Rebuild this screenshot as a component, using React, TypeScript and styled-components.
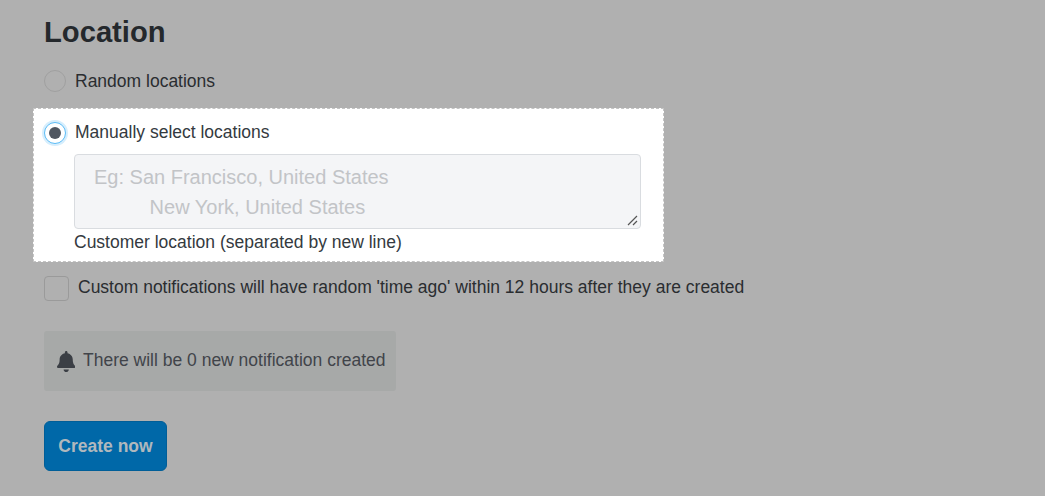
import React from "react";
import styled, { createGlobalStyle } from "styled-components";
import { FaBell } from "react-icons/fa";

const Global = createGlobalStyle`
  html, body { margin: 0; padding: 0; background: #b0b0b0; }
  body { font-family: "Liberation Sans", Arial, sans-serif; font-size: 17.5px; color: #24282c; }
  #root { height: 496px; overflow: hidden; }
`;

const Page = styled.main`
  box-sizing: border-box;
  height: 496px;
  padding: 15px 0 0 44px;
  display: flex;
  flex-direction: column;
  align-items: flex-start;
`;

const Heading = styled.h2`
  margin: 0;
  font-size: 29.2px;
  line-height: 35px;
  font-weight: 700;
  color: #24282c;
`;

const RadioRow = styled.label`
  display: flex;
  align-items: center;
  gap: 9px;
  height: 22px;
  line-height: 22px;
`;

const RandomRow = styled(RadioRow)`
  margin-top: 20px;
  color: #2a2d30;
`;

const RaisedLabel = styled.span`
  margin-bottom: 2px;
`;

const Radio = styled.span<{ $checked?: boolean }>`
  box-sizing: border-box;
  flex: none;
  width: 22px;
  height: 22px;
  border-radius: 50%;
  display: flex;
  align-items: center;
  justify-content: center;
  border: 1px solid ${(p) => (p.$checked ? "#5cbcf6" : "#a0a0a0")};
  background: ${(p) => (p.$checked ? "#fff" : "transparent")};
  box-shadow: ${(p) => (p.$checked ? "0 0 0 2px #d6eefd" : "none")};
`;

const RadioDot = styled.span`
  width: 12px;
  height: 12px;
  border-radius: 50%;
  background: #4f5660;
`;

const Highlight = styled.section`
  box-sizing: border-box;
  width: 631px;
  height: 154px;
  margin: 16px 0 0 -11px;
  padding: 14px 23px 0 11px;
  background: #fff;
  outline: 1px dashed #c4c4c4;
  outline-offset: -1px;
  color: #343a40;
`;

const Indented = styled.div`
  margin-left: 30px;
`;

const InputBox = styled.div`
  box-sizing: border-box;
  position: relative;
  height: 75px;
  margin-top: 10px;
  padding: 7px 19px;
  background: #f4f5f7;
  border: 1px solid #d9dce0;
  border-radius: 4px;
  font-size: 20px;
  line-height: 30px;
  color: #c2c4c7;
  white-space: pre;
`;

const Grip = styled.svg`
  position: absolute;
  right: 2px;
  bottom: 2px;
  width: 11px;
  height: 11px;
`;

const Helper = styled.div`
  margin-top: 3px;
  line-height: 20px;
`;

const CheckRow = styled.label`
  display: flex;
  align-items: center;
  gap: 9px;
  margin-top: 14px;
  height: 25px;
  color: #2a2d30;
`;

const CheckBox = styled.span`
  box-sizing: border-box;
  width: 25px;
  height: 25px;
  border: 1px solid #9a9a9a;
  border-radius: 4px;
`;

const Notice = styled.div`
  box-sizing: border-box;
  width: 352px;
  height: 60px;
  margin-top: 30px;
  padding-left: 13px;
  display: flex;
  align-items: center;
  gap: 7.6px;
  background: #a7a9a8;
  border-radius: 3px;
  color: #41444a;
`;

const BellIcon = styled(FaBell)`
  flex: none;
  width: 18.4px;
  height: 21px;
  color: #3b3f45;
`;

const NoticeText = styled.span`
  margin-bottom: 2px;
`;

const CreateButton = styled.button`
  box-sizing: border-box;
  width: 123px;
  height: 50px;
  margin-top: 30px;
  padding: 0;
  background: #0068a8;
  border: 1px solid #005e98;
  border-radius: 6px;
  color: #b0b8bd;
  font-family: "Liberation Sans", Arial, sans-serif;
  font-size: 17.5px;
  font-weight: 700;
`;

export default function App() {
  return (
    <>
      <Global />
      <Page>
        <Heading>Location</Heading>
        <RandomRow>
          <Radio />
          Random locations
        </RandomRow>
        <Highlight>
          <RadioRow>
            <Radio $checked>
              <RadioDot />
            </Radio>
            <RaisedLabel>Manually select locations</RaisedLabel>
          </RadioRow>
          <Indented>
            <InputBox>
              {"Eg: San Francisco, United States\n          New York, United States"}
              <Grip viewBox="0 0 11 11">
                <path d="M1 10 L10 1 M6 10 L10 6" stroke="#555" strokeWidth="1.2" fill="none" />
              </Grip>
            </InputBox>
            <Helper>Customer location (separated by new line)</Helper>
          </Indented>
        </Highlight>
        <CheckRow>
          <CheckBox />
          <RaisedLabel>Custom notifications will have random 'time ago' within 12 hours after they are created</RaisedLabel>
        </CheckRow>
        <Notice>
          <BellIcon />
          <NoticeText>There will be 0 new notification created</NoticeText>
        </Notice>
        <CreateButton>Create now</CreateButton>
      </Page>
    </>
  );
}
